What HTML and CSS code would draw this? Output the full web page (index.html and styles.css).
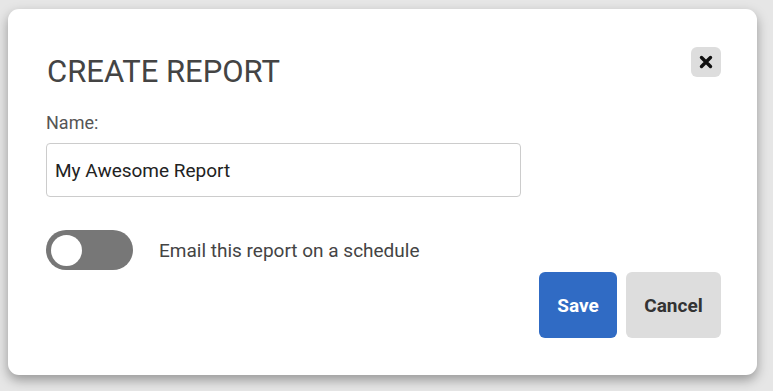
FILE: index.html
```html
<!DOCTYPE html>
<html lang="en">
<head>
    <meta charset="UTF-8">
    <title>Create Report</title>
    <link rel="stylesheet" href="styles.css">
</head>
<body>
<div class="modal">
    <div class="modal-header">
        <h1>CREATE REPORT</h1>
        <button class="close" aria-label="Close">
            <svg width="14" height="14" viewBox="0 0 14 14"><path d="M2.5 2.5 L11.5 11.5 M11.5 2.5 L2.5 11.5" stroke="#111" stroke-width="3.4" stroke-linecap="round"/></svg>
        </button>
    </div>
    <label class="field-label" for="name">Name:</label>
    <input id="name" class="field" type="text" value="My Awesome Report">
    <div class="schedule-row">
        <span class="toggle"><span class="knob"></span></span>
        <span class="toggle-label">Email this report on a schedule</span>
    </div>
    <div class="actions">
        <button class="btn btn-save">Save</button>
        <button class="btn btn-cancel">Cancel</button>
    </div>
</div>
</body>
</html>
```

FILE: styles.css
```css
body {
    margin: 0;
    background: #e6e6e6;
    font-family: Roboto, 'Liberation Sans', sans-serif;
    height: 391px;
    overflow: hidden;
}
.modal {
    margin: 9px 0 0 8px;
    width: 749px;
    height: 366px;
    box-sizing: border-box;
    background: white;
    border-radius: 11px;
    box-shadow: 0 5px 12px rgba(0, 0, 0, 0.35);
    padding: 38px 36px 0 38px;
}
.modal-header {
    display: flex;
    justify-content: space-between;
    align-items: flex-start;
}
h1 {
    margin: 6px 0 0 1px;
    font-size: 31px;
    font-weight: 400;
    color: #444;
    letter-spacing: 0;
}
.close {
    margin-top: 0;
    width: 30px;
    height: 30px;
    border: none;
    border-radius: 6px;
    background: #dddddd;
    display: flex;
    align-items: center;
    justify-content: center;
    padding: 0;
}
.field-label {
    display: block;
    margin-top: 22px;
    font-size: 18px;
    color: #555;
}
.field {
    display: block;
    margin-top: 10px;
    width: 475px;
    height: 54px;
    box-sizing: border-box;
    border: 1px solid #ccc;
    border-radius: 4px;
    padding: 0 8px;
    font-family: inherit;
    font-size: 19px;
    color: #222;
}
.schedule-row {
    display: flex;
    align-items: center;
    margin-top: 33px;
}
.toggle {
    width: 87px;
    height: 40px;
    border-radius: 20px;
    background: #777;
    display: flex;
    align-items: center;
    padding-left: 5px;
    box-sizing: border-box;
}
.knob {
    width: 31px;
    height: 31px;
    border-radius: 50%;
    background: white;
}
.toggle-label {
    margin-left: 26px;
    font-size: 19px;
    color: #444;
}
.actions {
    display: flex;
    justify-content: flex-end;
    gap: 9px;
    margin-top: 2px;
}
.btn {
    height: 66px;
    border: none;
    border-radius: 6px;
    font-family: inherit;
    font-size: 19px;
    font-weight: 700;
}
.btn-save {
    width: 78px;
    background: #306bc4;
    color: white;
}
.btn-cancel {
    width: 95px;
    background: #dddddd;
    color: #333;
}
```
